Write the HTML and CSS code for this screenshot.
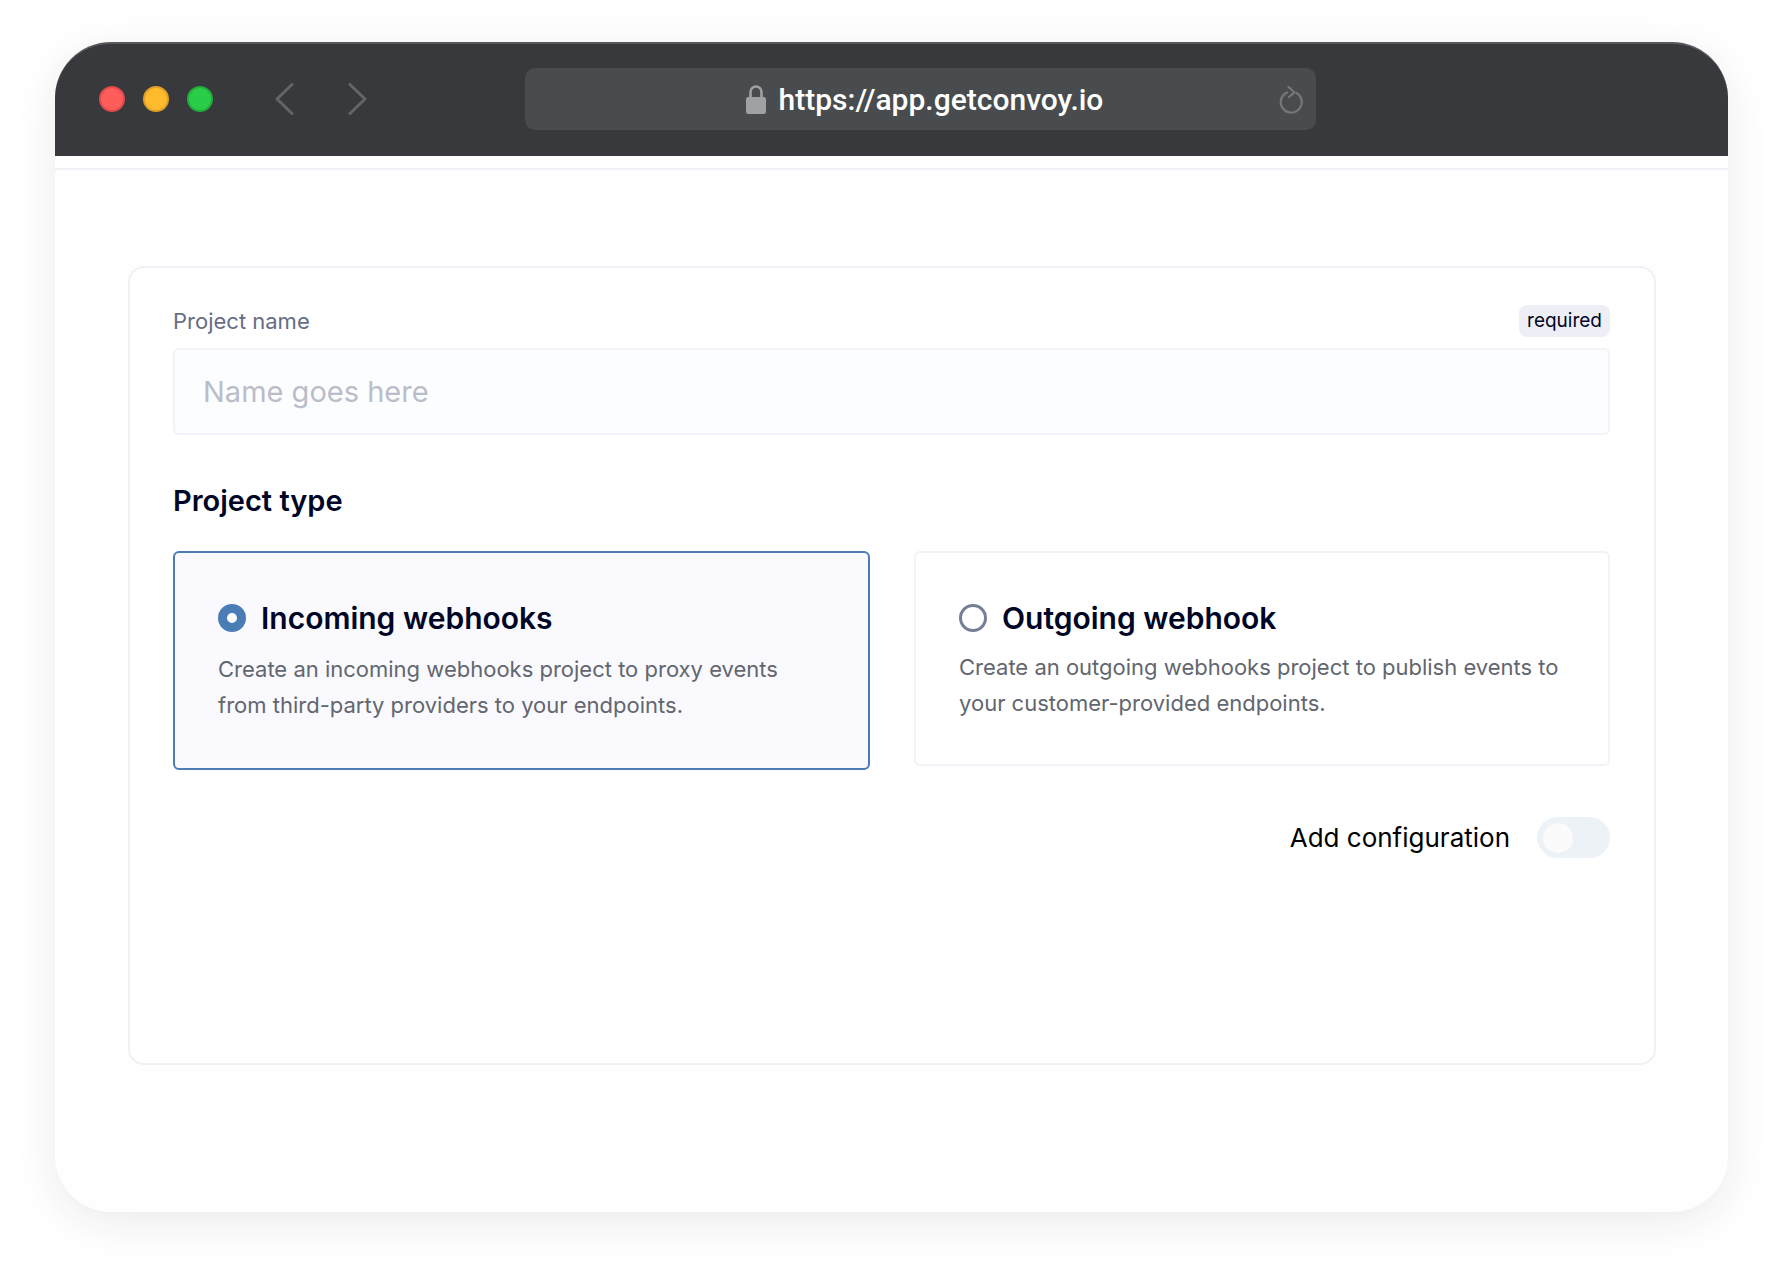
FILE: index.html
```html
<!DOCTYPE html>
<html lang="en">
<head>
    <meta charset="UTF-8">
    <meta name="viewport" content="width=device-width, initial-scale=1.0">
    <title>Convoy - Create Project</title>
    <link rel="stylesheet" href="styles.css">
</head>
<body>

<div class="window">
    <div class="titlebar">
        <div class="lights">
            <span class="light red"></span>
            <span class="light yellow"></span>
            <span class="light green"></span>
        </div>
        <div class="arrows">
            <svg width="20" height="32" viewBox="0 0 20 32"><path d="M18 1.5 3 16l15 14.5" fill="none" stroke="#646566" stroke-width="3" stroke-linecap="round" stroke-linejoin="round"/></svg>
            <svg width="20" height="32" viewBox="0 0 20 32"><path d="M2 1.5 17 16 2 30.5" fill="none" stroke="#646566" stroke-width="3" stroke-linecap="round" stroke-linejoin="round"/></svg>
        </div>
        <div class="urlbar">
            <div class="url">
                <svg width="20" height="29" viewBox="0 0 20 29"><path d="M4.5 13V7a5.5 5.5 0 0 1 11 0v6" fill="none" stroke="#a0a1a2" stroke-width="2.6"/><rect y="12" width="20" height="17" rx="2.5" fill="#a0a1a2"/></svg>
                <span>https://app.getconvoy.io</span>
            </div>
            <svg class="reload" width="25" height="28" viewBox="0 0 25 28"><path d="M9 6.5a10.5 10.5 0 1 0 9.5 0.5" fill="none" stroke="#757778" stroke-width="2.2" stroke-linecap="round"/><path d="M7.5 1.5 13.5 6.8 8 11.5" fill="none" stroke="#757778" stroke-width="2.2" stroke-linecap="round" stroke-linejoin="round" transform="translate(3 -0.5)"/></svg>
        </div>
    </div>
    <div class="page">
        <div class="rule"></div>
        <form class="card">
            <div class="label-row">
                <label for="projectName">Project name</label>
                <span class="badge">required</span>
            </div>
            <input type="text" id="projectName" placeholder="Name goes here">

            <h3>Project type</h3>

            <div class="types">
                <div class="type active">
                    <div class="type-head">
                        <span class="radio"></span>
                        <strong>Incoming webhooks</strong>
                    </div>
                    <p>Create an incoming webhooks project to proxy events from third-party providers to your endpoints.</p>
                </div>
                <div class="type">
                    <div class="type-head">
                        <span class="radio"></span>
                        <strong>Outgoing webhook</strong>
                    </div>
                    <p>Create an outgoing webhooks project to publish events to your customer-provided endpoints.</p>
                </div>
            </div>

            <div class="config">
                <span>Add configuration</span>
                <span class="toggle"><span class="knob"></span></span>
            </div>
        </form>
    </div>
</div>

</body>
</html>
```
FILE: styles.css
```css
* {
    box-sizing: border-box;
}
body {
    margin: 0;
    padding: 42px 55px 66px;
    background-color: #fff;
    font-family: Inter, "Liberation Sans", sans-serif;
}
.window {
    height: 1170px;
    border-radius: 56px;
    background-color: #fefefe;
    box-shadow: 0 10px 44px rgba(30, 30, 60, 0.09);
}

/* browser chrome */
.titlebar {
    display: flex;
    align-items: center;
    height: 114px;
    padding: 0 0 2px 44px;
    border-top: 2px solid #58595c;
    border-radius: 56px 56px 0 0;
    background-color: #38393c;
}
.lights {
    display: flex;
    gap: 18px;
}
.light {
    width: 26px;
    height: 26px;
    border-radius: 50%;
    border: 2px solid;
}
.red {
    background-color: #ff5c5c;
    border-color: #e04a4a;
}
.yellow {
    background-color: #ffbb2c;
    border-color: #e0a028;
}
.green {
    background-color: #29cd48;
    border-color: #22ad3c;
}
.arrows {
    display: flex;
    gap: 54px;
    margin-left: 61px;
}
.urlbar {
    position: relative;
    display: flex;
    align-items: center;
    justify-content: center;
    width: 791px;
    height: 62px;
    margin-left: 157px;
    padding-left: 8px;
    border-radius: 10px;
    background-color: #494c4e;
}
.url {
    display: flex;
    align-items: center;
    gap: 13px;
    color: #fff;
    font-family: Roboto, sans-serif;
    font-size: 30px;
    font-weight: 500;
}
.reload {
    position: absolute;
    right: 13px;
    top: 18px;
}

/* page */
.page {
    padding: 12px 72px 0 73px;
}
.rule {
    height: 2px;
    margin: 0 -72px 96px -73px;
    background-color: #f0f0f6;
}
.card {
    height: 799px;
    padding: 37px 44px 0 43px;
    border: 2px solid #f0f0f7;
    border-radius: 16px;
    background-color: #fff;
}
.label-row {
    display: flex;
    justify-content: space-between;
    align-items: center;
    margin-bottom: 11px;
}
label {
    color: #666d85;
    font-size: 22px;
}
.badge {
    padding: 4px 8px;
    height: 32px;
    border-radius: 8px;
    background-color: #eeeef6;
    color: #000625;
    font-size: 19px;
    line-height: 24px;
}
input {
    display: block;
    width: 100%;
    height: 87px;
    padding: 0 28px;
    border: 2px solid #f2f3f8;
    border-radius: 6px;
    background-color: #fcfdfe;
    font-family: Inter, sans-serif;
    font-size: 29px;
}
input::placeholder {
    color: #b9bdc9;
}
h3 {
    margin: 48px 0 32px;
    color: #000625;
    font-size: 29px;
    font-weight: 600;
    line-height: 36px;
}
.types {
    display: grid;
    grid-template-columns: 697px 696px;
    gap: 44px;
    align-items: start;
}
.type {
    height: 215px;
    padding: 47px 43px 0;
    border: 2px solid #f2f2f8;
    border-radius: 6px;
}
.type.active {
    height: 219px;
    border-color: #4a7db6;
    background-color: #f9f9fe;
}
.type-head {
    display: flex;
    align-items: center;
    gap: 15px;
    color: #000625;
    font-size: 30px;
    line-height: 36px;
}
.type-head strong {
    font-weight: 600;
}
.radio {
    width: 28px;
    height: 28px;
    border: 3px solid #757d98;
    border-radius: 50%;
}
.active .radio {
    border: 9px solid #4a7db6;
    background-color: #fff;
}
.type p {
    margin: 14px 0 0;
    color: #62666f;
    font-size: 22px;
    line-height: 35.5px;
}
.active p {
    margin-top: 16px;
}
.config {
    display: flex;
    justify-content: flex-end;
    align-items: center;
    gap: 27px;
    margin-top: 47px;
    color: #000;
    font-size: 26px;
}
.toggle {
    display: flex;
    align-items: center;
    width: 73px;
    height: 41px;
    padding-left: 6px;
    border-radius: 21px;
    background-color: #edf2f7;
}
.knob {
    width: 30px;
    height: 30px;
    border-radius: 50%;
    background-color: #fbfbfc;
}
```
